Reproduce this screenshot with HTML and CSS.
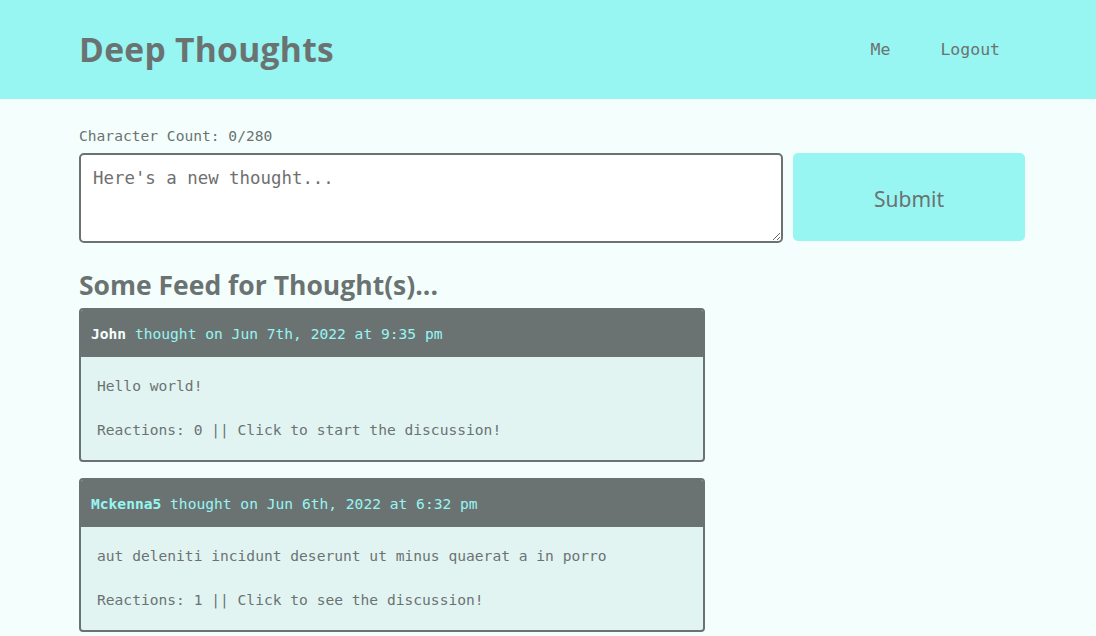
FILE: index.html
```html
<!DOCTYPE html>
<html lang="en">
<head>
<meta charset="utf-8">
<title>Deep Thoughts</title>
<link rel="stylesheet" href="styles.css">
</head>
<body>
<header class="site-header">
  <div class="container header-inner">
    <h1 class="brand">Deep Thoughts</h1>
    <nav class="nav">
      <a href="#" class="nav-link">Me</a>
      <a href="#" class="nav-link">Logout</a>
    </nav>
  </div>
</header>
<main class="container main">
  <p class="char-count">Character Count: 0/280</p>
  <form class="thought-form">
    <textarea class="thought-input" placeholder="Here's a new thought..."></textarea>
    <button type="button" class="submit-btn">Submit</button>
  </form>
  <h3 class="feed-title">Some Feed for Thought(s)...</h3>
  <div class="feed">
    <div class="card">
      <p class="card-header"><a href="#" class="username">John</a> thought on Jun 7th, 2022 at 9:35 pm</p>
      <div class="card-body">
        <p class="card-text">Hello world!</p>
        <p class="card-text">Reactions: 0 || Click to start the discussion!</p>
      </div>
    </div>
    <div class="card">
      <p class="card-header"><a href="#" class="username alt">Mckenna5</a> thought on Jun 6th, 2022 at 6:32 pm</p>
      <div class="card-body">
        <p class="card-text">aut deleniti incidunt deserunt ut minus quaerat a in porro</p>
        <p class="card-text">Reactions: 1 || Click to see the discussion!</p>
      </div>
    </div>
  </div>
</main>
</body>
</html>
```
FILE: styles.css
```css
* { box-sizing: border-box; }
html, body { margin: 0; padding: 0; }
body {
  background: #f4fffd;
  color: #6b7372;
  font-family: "DejaVu Sans Mono", "Liberation Mono", monospace;
  font-size: 14.6px;
}
.container {
  width: 946px;
  margin-left: 79px;
}
.site-header {
  background: #97f6f2;
  height: 99px;
}
.header-inner {
  display: flex;
  align-items: center;
  justify-content: space-between;
  height: 99px;
}
.brand {
  margin: 0;
  font-family: "Open Sans", "Noto Sans", sans-serif;
  font-weight: 700;
  font-size: 33.6px;
  color: #6b7372;
  letter-spacing: 0.3px;
  padding-bottom: 2px;
}
.nav {
  display: flex;
  gap: 50px;
  margin-right: 25px;
}
.nav-link {
  color: #6b7372;
  text-decoration: none;
  font-size: 16.5px;
}
.main { padding-top: 27px; }
.char-count {
  margin: 0 0 7px;
  line-height: 20px;
  font-size: 14.6px;
}
.thought-form {
  display: flex;
  gap: 10px;
  align-items: flex-start;
}
.thought-input {
  width: 704px;
  height: 90px;
  border: 2px solid #6b7372;
  border-radius: 5px;
  background: #fff;
  padding: 13px 12px;
  font-family: "DejaVu Sans Mono", "Liberation Mono", monospace;
  font-size: 17.4px;
  color: #6b7372;
  resize: vertical;
}
.thought-input::placeholder { color: #6f6f6f; }
.submit-btn {
  width: 232px;
  height: 88px;
  border: none;
  border-radius: 5px;
  background: #97f6f2;
  color: #6b7372;
  font-family: "Noto Sans", "Open Sans", sans-serif;
  font-size: 21px;
  cursor: pointer;
  padding: 3px 0 0;
}
.feed-title {
  margin: 25px 0 6px;
  font-family: "Open Sans", "Noto Sans", sans-serif;
  font-weight: 700;
  font-size: 26.5px;
  line-height: 34px;
  color: #6b7372;
}
.feed {
  display: flex;
  flex-direction: column;
  gap: 16px;
  width: 626px;
}
.card {
  border: 2px solid #6b7372;
  border-radius: 4px;
  background: #e1f4f2;
  overflow: hidden;
}
.card-header {
  margin: 0;
  background: #6b7372;
  color: #97f6f2;
  padding: 12px 10px 12px;
  line-height: 23px;
}
.username {
  color: #f4fffd;
  font-weight: 700;
  text-decoration: none;
}
.username.alt { color: #97f6f2; }
.card-body { padding: 18px 16px 19px; }
.card-text {
  margin: 0;
  line-height: 22px;
}
.card-text + .card-text { margin-top: 22px; }
```
